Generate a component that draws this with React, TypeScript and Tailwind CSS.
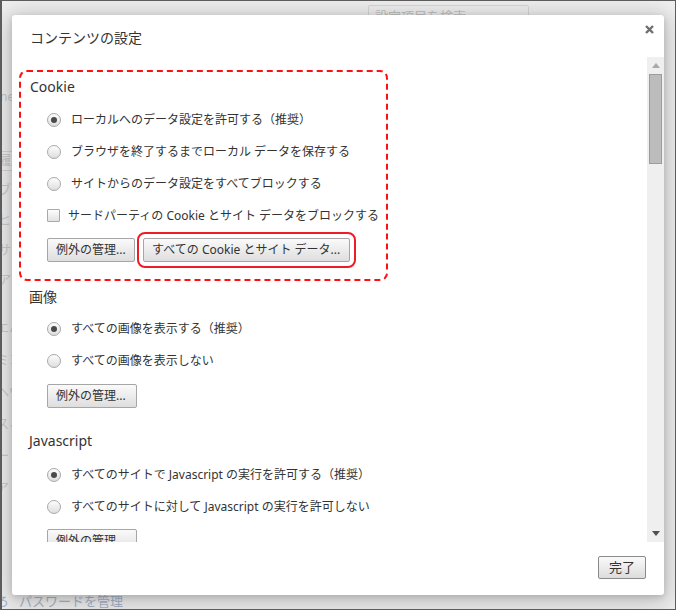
import React from "react";

const Radio = ({ checked }: { checked?: boolean }) => (
  <span className="w-[14px] h-[14px] rounded-full border border-[#a9a9a9] bg-linear-to-b from-[#fdfdfd] to-[#dedede] flex items-center justify-center shrink-0">
    {checked && <span className="w-[6px] h-[6px] rounded-full bg-[#4a4a4a]" />}
  </span>
);

const Check = () => (
  <span className="w-[13px] h-[13px] rounded-[1px] border border-[#a9a9a9] bg-linear-to-b from-[#fdfdfd] to-[#e2e2e2] shrink-0" />
);

const RadioRow = ({ checked, children }: { checked?: boolean; children: React.ReactNode }) => (
  <div className="h-[32px] flex items-center gap-[10px] text-[12px] text-[#333]">
    <Radio checked={checked} />
    <span className="whitespace-nowrap">{children}</span>
  </div>
);

const Btn = ({ children, className = "" }: { children: React.ReactNode; className?: string }) => (
  <div
    className={
      "h-[24px] px-[8px] flex items-center border border-[#a6a6a6] rounded-[2px] bg-linear-to-b from-[#fafafa] to-[#dedede] text-[12px] text-[#333] whitespace-nowrap shrink-0 " +
      className
    }
  >
    {children}
  </div>
);

export default function App() {
  return (
    <div className="w-[676px] h-[610px] relative overflow-hidden bg-[#f0f0f0] border border-l-2 border-[#5c5c5c] font-['Noto_Sans','Noto_Sans_CJK_JP',sans-serif]">
      {/* background page (dimmed) */}
      <div className="absolute left-[366px] top-[4px] w-[161px] h-[24px] border border-[#d8d8d8] rounded-[2px] pl-[6px] text-[13px] leading-[20px] text-[#c4c4c4] whitespace-nowrap">
        設定項目を検索
      </div>
      <div className="absolute left-[-2px] top-[88px] text-[12px] text-[#c8c8c8] leading-[16px]">ne</div>
      <div className="absolute left-[-4px] top-[150px] w-[16px] h-[20px] overflow-hidden border border-[#d6d6d6] text-[12px] text-[#c8c8c8] leading-[18px] whitespace-nowrap">
        履歴
      </div>
      <div className="absolute left-[-4px] top-[180px] flex flex-col gap-[14px] text-[13px] leading-[16px] text-[#cccccc] whitespace-nowrap">
        <span>ブラ</span>
        <span>ヒキ</span>
        <span>サイ</span>
        <span>アト</span>
      </div>
      <div className="absolute left-[-6px] top-[318px] flex flex-col gap-[16px] text-[13px] leading-[16px] text-[#cccccc] whitespace-nowrap">
        <span>エハ</span>
        <span>ミコ</span>
        <span>ヘヴ</span>
        <span>スィ</span>
        <span>ート</span>
        <span>アト</span>
      </div>
      <div className="absolute left-[-6px] top-[592px] flex gap-[10px] text-[13px] leading-[16px] text-[#a9b3c9] whitespace-nowrap">
        <span>ろ</span>
        <span>パスワードを管理</span>
      </div>

      {/* dialog */}
      <div className="absolute left-[10px] top-[14px] w-[652px] h-[580px] bg-white rounded-[3px] shadow-[0_4px_23px_5px_rgba(0,0,0,0.2),0_2px_6px_rgba(0,0,0,0.15)] flex flex-col">
        <div className="h-[42px] shrink-0 pl-[18px] pt-[14px] text-[14px] leading-[18px] text-[#333] relative">
          コンテンツの設定
          <svg className="absolute right-[10px] top-[10px]" width="9" height="9" viewBox="0 0 9 9">
            <path d="M1 1 L8 8 M8 1 L1 8" stroke="#6f6f6f" strokeWidth="2.4" />
          </svg>
        </div>

        <div className="h-[485px] shrink-0 flex">
          <div className="flex-1 overflow-hidden pt-[13px] pl-[7px]">
            {/* Cookie */}
            <div className="w-[369px] h-[211px] border-2 border-dashed border-[#ff1010] rounded-[8px] pl-[9px]">
              <div className="h-[28px] flex items-center text-[14px] text-[#333]">Cookie</div>
              <div className="mt-[4px] pl-[17px]">
                <RadioRow checked>ローカルへのデータ設定を許可する（推奨）</RadioRow>
                <RadioRow>ブラウザを終了するまでローカル データを保存する</RadioRow>
                <RadioRow>サイトからのデータ設定をすべてブロックする</RadioRow>
                <div className="h-[31px] flex items-center gap-[8px] text-[12px] text-[#333]">
                  <Check />
                  <span className="whitespace-nowrap">サードパーティの Cookie とサイト データをブロックする</span>
                </div>
                <div className="mt-[1px] h-[36px] flex items-center gap-[2px]">
                  <Btn>例外の管理...</Btn>
                  <div className="border-2 border-[#ee1c24] rounded-[8px] p-[4px]">
                    <Btn className="w-[207px] justify-center">すべての Cookie とサイト データ...</Btn>
                  </div>
                </div>
              </div>
            </div>

            {/* Images */}
            <div className="pl-[10px]">
              <div className="mt-[1px] h-[28px] flex items-center text-[14px] text-[#333]">画像</div>
              <div className="mt-[3px] pl-[18px]">
                <RadioRow checked>すべての画像を表示する（推奨）</RadioRow>
                <RadioRow>すべての画像を表示しない</RadioRow>
                <div className="mt-[7px] flex">
                  <Btn className="w-[90px]">例外の管理...</Btn>
                </div>
              </div>

              <div className="mt-[18px] h-[28px] flex items-center text-[14px] text-[#333]">Javascript</div>
              <div className="mt-[5px] pl-[18px]">
                <RadioRow checked>すべてのサイトで Javascript の実行を許可する（推奨）</RadioRow>
                <RadioRow>すべてのサイトに対して Javascript の実行を許可しない</RadioRow>
                <div className="mt-[6px] flex">
                  <Btn className="w-[90px]">例外の管理...</Btn>
                </div>
              </div>
            </div>
          </div>

          {/* scrollbar */}
          <div className="w-[17px] shrink-0 bg-[#efefef] flex flex-col items-center">
            <div className="h-[17px] flex items-center justify-center">
              <svg width="8" height="5" viewBox="0 0 8 5">
                <path d="M0 5 L4 0 L8 5 Z" fill="#a8a8a8" />
              </svg>
            </div>
            <div className="w-[13px] h-[90px] bg-[#bcbcbc] border border-[#9c9c9c]" />
            <div className="flex-1" />
            <div className="h-[17px] flex items-center justify-center">
              <svg width="8" height="5" viewBox="0 0 8 5">
                <path d="M0 0 L8 0 L4 5 Z" fill="#505050" />
              </svg>
            </div>
          </div>
        </div>

        <div className="flex-1 flex justify-end items-start pt-[14px] pr-[18px]">
          <div className="w-[48px] h-[23px] flex items-center justify-center border border-[#8a8a8a] rounded-[2px] bg-linear-to-b from-[#fafafa] to-[#dcdcdc] text-[13px] text-[#333]">
            完了
          </div>
        </div>
      </div>
    </div>
  );
}
